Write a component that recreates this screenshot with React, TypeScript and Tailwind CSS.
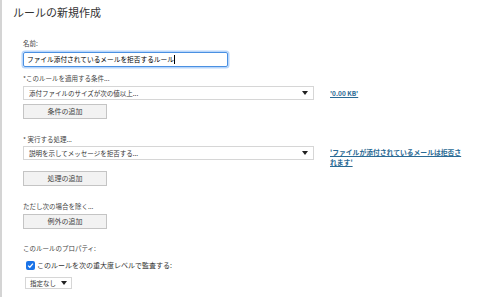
const font = "font-['Noto_Sans_CJK_JP','Noto_Sans',sans-serif]"

function Arrow() {
  return (
    <svg width="6" height="4" viewBox="0 0 6 4" className="shrink-0">
      <path d="M0 0 L6 0 L3 4 Z" fill="#222" />
    </svg>
  )
}

function Select({ text, width }: { text: string; width: string }) {
  return (
    <div
      className={`${width} h-[14px] shrink-0 flex items-center justify-between border border-[#d6d6d6] bg-white pl-[5px] pr-[5px] text-[6.5px] leading-none text-[#333]`}
    >
      <span>{text}</span>
      <Arrow />
    </div>
  )
}

function AddButton({ label }: { label: string }) {
  return (
    <div className="w-[84px] h-[15px] flex items-center justify-center border border-[#c4c4c4] bg-[#f2f2f2] text-[7px] leading-none text-[#444]">
      {label}
    </div>
  )
}

function Label({ children, className = '' }: { children: React.ReactNode; className?: string }) {
  return <div className={`text-[6.5px] leading-[10px] text-[#444] ${className}`}>{children}</div>
}

export default function App() {
  return (
    <div className={`w-[480px] h-[297px] overflow-hidden bg-white border-l-2 border-[#d4d4d4] ${font}`}>
      {/* 見出し */}
      <div className="pl-[11px] pt-[5px] text-[11px] leading-[14px] text-[#333]">ルールの新規作成</div>

      <div className="pl-[21px] flex flex-col items-start">
        <Label className="mt-[19px]">名前:</Label>
        <div className="mt-[4px] w-[205px] h-[15px] flex items-center rounded-[2px] border border-[#4a90e2] shadow-[0_0_0_1.5px_#b8d6fb] px-[3px] text-[6.7px] leading-none text-black">
          ファイル添付されているメールを拒否するルール<span className="w-px h-[9px] bg-black" />
        </div>

        <Label className="mt-[6px]">*このルールを適用する条件...</Label>
        <div className="mt-[3px] flex items-center gap-[16px]">
          <Select text="添付ファイルのサイズが次の値以上..." width="w-[291px]" />
          <a className="text-[6.5px] leading-[10px] font-bold text-[#2a6a94] underline">'0.00 KB'</a>
        </div>
        <div className="mt-[4px]">
          <AddButton label="条件の追加" />
        </div>

        <Label className="mt-[15px]">* 実行する処理...</Label>
        <div className="mt-[2px] flex items-start gap-[16px]">
          <Select text="説明を示してメッセージを拒否する..." width="w-[291px]" />
          <a className="mt-[1px] w-[136px] text-[6.8px] leading-[10px] font-bold text-[#2a6a94] underline">
            'ファイルが添付されているメールは拒否されます'
          </a>
        </div>
        <div className="mt-[4px]">
          <AddButton label="処理の追加" />
        </div>

        <Label className="mt-[15px]">ただし次の場合を除く...</Label>
        <div className="mt-[3px]">
          <AddButton label="例外の追加" />
        </div>

        <Label className="mt-[14px]">このルールのプロパティ:</Label>
        <div className="mt-[7px] ml-[3px] flex items-center gap-[2px]">
          <div className="w-[9px] h-[9px] rounded-[2px] bg-[#1a73e8] flex items-center justify-center">
            <svg width="7" height="7" viewBox="0 0 8 8">
              <path d="M1.3 4.2 L3.2 6 L6.8 1.8" fill="none" stroke="white" strokeWidth="1.4" />
            </svg>
          </div>
          <span className="text-[7px] leading-[10px] text-[#333]">このルールを次の重大度レベルで監査する:</span>
        </div>
        <div className="mt-[7px] ml-[2px] w-[47px] h-[12px] flex items-center justify-between border border-[#d6d6d6] bg-white pl-[4px] pr-[4px] text-[6.5px] leading-none text-[#333]">
          <span>指定なし</span>
          <Arrow />
        </div>
      </div>
    </div>
  )
}
